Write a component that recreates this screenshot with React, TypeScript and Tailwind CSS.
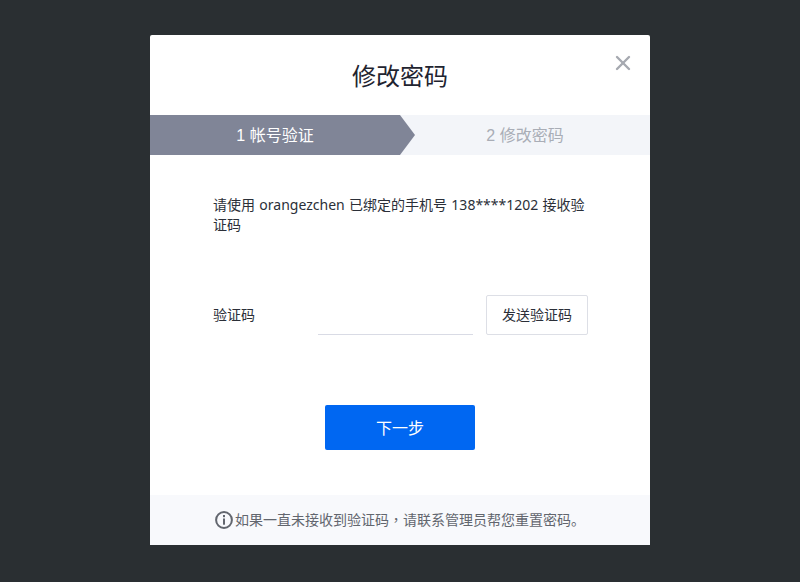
import { X } from 'lucide-react'

const font = 'font-["Liberation_Sans","Noto_Sans_CJK_SC",sans-serif]'

export default function App() {
  return (
    <div className={`min-h-[582px] bg-[#2a2f32] pt-[35px] ${font}`}>
      <div className="relative mx-auto w-[500px] h-[510px] flex flex-col bg-white rounded-t-[2px]">
        <button className="absolute right-[15px] top-[16px] text-[#a6a9b0]">
          <X size={24} strokeWidth={2.4} />
        </button>
        <h1 className="h-[80px] pt-[3px] flex items-center justify-center text-[24px] font-normal text-[#1f2430]">修改密码</h1>

        <div className="flex h-[40px] bg-[#f3f5f9] text-[16px]">
          <div className="relative w-[250px] pt-[2px] flex items-center justify-center bg-[#808597] text-white">
            1 帐号验证
            <span className="absolute left-full top-0 h-[40px] w-[15px] bg-[#808597] [clip-path:polygon(0_0,100%_50%,0_100%)]" />
          </div>
          <div className="w-[250px] pt-[2px] flex items-center justify-center text-[#a9adb6]">2 修改密码</div>
        </div>

        <div className="flex-1 flex flex-col px-[63px] pt-[40px]">
          <p className='w-[375px] text-[14px] leading-[20px] text-[#2b2f38] font-["Noto_Sans","Noto_Sans_CJK_SC",sans-serif] [word-spacing:0.7px]'>
            请使用 orangezchen 已绑定的手机号 138****1202 接收验证码
          </p>
          <div className="flex items-center mt-[60px] h-[40px]">
            <label className="w-[105px] shrink-0 text-[14px] text-[#2b2f38]">验证码</label>
            <input className="w-[155px] shrink-0 h-[40px] border-b border-[#d9dbe5] outline-none" />
            <button className="ml-[13px] w-[102px] shrink-0 h-[40px] border border-[#dddfe6] rounded-[2px] text-[14px] text-[#2b2f38]">发送验证码</button>
          </div>
          <button className="mx-auto mt-[70px] w-[150px] h-[45px] pt-[2px] bg-[#0067f2] rounded-[2px] text-white text-[16px]">下一步</button>
        </div>

        <div className="h-[50px] flex items-center justify-center gap-[2px] bg-[#f8f9fc] text-[14px] text-[#62666e]">
          <svg width="18" height="18" viewBox="0 0 18 18" fill="none" className="shrink-0">
            <circle cx="9" cy="9" r="7.9" stroke="#62666e" strokeWidth="2" />
            <rect x="8" y="4" width="2" height="2.2" fill="#62666e" />
            <rect x="8" y="7.5" width="2" height="6.2" fill="#62666e" />
          </svg>
          <span>
            如果一直未接收到验证码<span className='font-["Noto_Sans_CJK_TC",sans-serif]'>，</span>请联系管理员帮您重置密码。
          </span>
        </div>
      </div>
    </div>
  )
}
